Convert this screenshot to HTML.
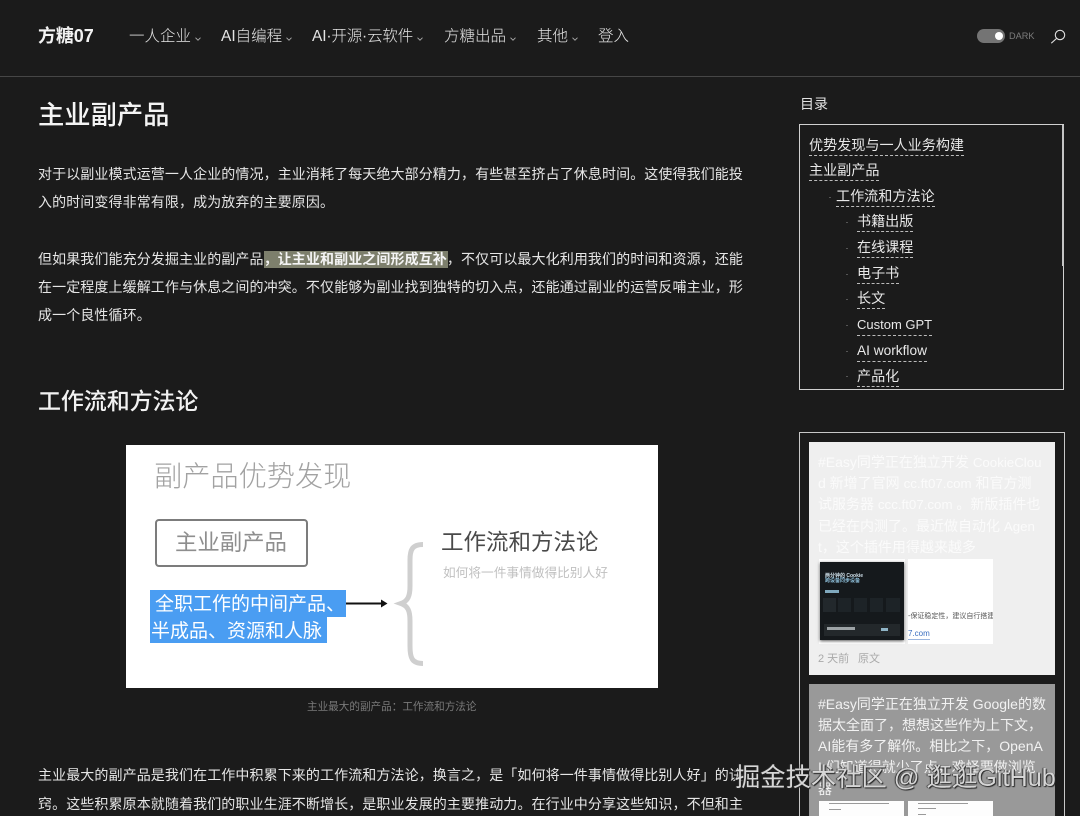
<!DOCTYPE html>
<html lang="zh"><head><meta charset="utf-8"><style>
html,body{margin:0;padding:0;background:#1b1b1b}
#p{position:relative;width:1080px;height:816px;overflow:hidden;background:#1b1b1b;color:#e8e8e8;font-family:"Liberation Sans","Noto Sans CJK SC",sans-serif}
#p div{position:absolute;white-space:nowrap}
.n{font-size:15.5px;top:26px;line-height:22px;color:#e4e4e4;font-weight:300}
.n svg{margin-left:4px;vertical-align:0}
.l{left:38px;font-size:14px;line-height:20px;letter-spacing:.1px;color:#e6e6e6}
.t{font-size:14.1px;line-height:18px;color:#e8e8e8;border-bottom:1px dashed #bbb;padding-bottom:1px}
.d{width:2px;height:1px;background:#555}
.c1{font-size:14px;line-height:20px;color:#fbfbfb;left:818px}
.c1 span{font-size:13.300px}
.c2{font-size:14px;line-height:20px;color:#f2f2f2;left:818px}
.g{background:#9a9a9a;height:1px}
</style></head><body><div id="p">

<div style="left:38px;top:25px;font-size:18px;line-height:23px;font-weight:700;color:#f2f2f2;letter-spacing:-.1px">方糖07</div>
<div class="n" style="left:129px">一人企业<svg width="6" height="4" viewBox="0 0 6 4"><path d="M.5 .7 3 3.200 5.500 .7" fill="none" stroke="#aaa" stroke-width=".9"/></svg></div>
<div class="n" style="left:221px">AI自编程<svg width="6" height="4" viewBox="0 0 6 4"><path d="M.5 .7 3 3.200 5.500 .7" fill="none" stroke="#aaa" stroke-width=".9"/></svg></div>
<div class="n" style="left:312px;letter-spacing:-.15px">AI·开源·云软件<svg width="6" height="4" viewBox="0 0 6 4"><path d="M.5 .7 3 3.200 5.500 .7" fill="none" stroke="#aaa" stroke-width=".9"/></svg></div>
<div class="n" style="left:444px">方糖出品<svg width="6" height="4" viewBox="0 0 6 4"><path d="M.5 .7 3 3.200 5.500 .7" fill="none" stroke="#aaa" stroke-width=".9"/></svg></div>
<div class="n" style="left:537px">其他<svg width="6" height="4" viewBox="0 0 6 4"><path d="M.5 .7 3 3.200 5.500 .7" fill="none" stroke="#aaa" stroke-width=".9"/></svg></div>
<div class="n" style="left:598px">登入</div>

<div style="left:977px;top:29px;width:28px;height:14px;border-radius:7px;background:#747474"></div>
<div style="left:995px;top:32px;width:8px;height:8px;border-radius:50%;background:#fff"></div>
<div style="left:1009px;top:30px;font-size:9.200px;line-height:13px;color:#7c7c7c">DARK</div>
<svg style="position:absolute;left:1050px;top:28px" width="16" height="16" viewBox="0 0 16 16"><circle cx="10" cy="7" r="4.700" fill="none" stroke="#ddd" stroke-width="1.100"/><path d="M6.600 10.400 1.300 15.200" stroke="#ddd" stroke-width="1.100" fill="none"/></svg>
<div style="left:0;top:76px;width:1080px;height:1px;background:#464646"></div>

<div style="left:38px;top:99px;font-size:26.300px;line-height:33px;font-weight:500;color:#f4f4f4">主业副产品</div>
<div class="l" style="top:164px">对于以副业模式运营一人企业的情况，主业消耗了每天绝大部分精力，有些甚至挤占了休息时间。这使得我们能投</div>
<div class="l" style="top:192px">入的时间变得非常有限，成为放弃的主要原因。</div>
<div style="left:264px;top:251px;width:184px;height:17px;background:#7d7f6c"></div>
<div class="l" style="top:249px">但如果我们能充分发掘主业的副产品<b style="font-weight:700;color:#f4f4f4">，让主业和副业之间形成互补</b>，不仅可以最大化利用我们的时间和资源，还能</div>
<div class="l" style="top:277px">在一定程度上缓解工作与休息之间的冲突。不仅能够为副业找到独特的切入点，还能通过副业的运营反哺主业，形</div>
<div class="l" style="top:305px">成一个良性循环。</div>
<div style="left:38px;top:386px;font-size:23px;line-height:30px;font-weight:500;color:#f2f2f2;letter-spacing:-.1px">工作流和方法论</div>

<div style="left:126px;top:445px;width:532px;height:243px;background:#fff"></div>
<div style="left:154px;top:458px;font-size:28.200px;line-height:36px;color:#a2a2a2;font-weight:300">副产品优势发现</div>
<div style="left:155px;top:519px;width:149px;height:44px;border:2px solid #7c7c7c;border-radius:4px"></div>
<div style="left:175px;top:529px;font-size:22.400px;line-height:28px;color:#8e8e8e">主业副产品</div>
<div style="left:150px;top:590px;width:196px;height:27px;background:#4a9df2"></div>
<div style="left:150px;top:617px;width:177px;height:26px;background:#4a9df2"></div>
<div style="left:155px;top:593px;font-size:19px;line-height:24px;color:#fff">全职工作的中间产品、</div>
<div style="left:151px;top:620px;font-size:19px;line-height:24px;color:#fff">半成品、资源和人脉</div>
<svg style="position:absolute;left:346px;top:596px" width="42" height="14"><path d="M0 7.500H36" stroke="#111" stroke-width="2"/><path d="M35 3.500 41.500 7.500 35 11.500Z" fill="#111"/></svg>
<svg style="position:absolute;left:392px;top:538px" width="36" height="132"><path d="M31 6.500C20 6.500 18 12 18 22V48C18 58 16 63 9 65.500 16 68 18 73 18 83V108C18 120 20 125.500 31 125.500" fill="none" stroke="#cfcfcf" stroke-width="5"/></svg>
<div style="left:441px;top:529px;font-size:22.500px;line-height:28px;color:#4a4a4a">工作流和方法论</div>
<div style="left:443px;top:565px;font-size:12.700px;line-height:16px;color:#c0c0c0">如何将一件事情做得比别人好</div>
<div style="left:307px;top:700px;font-size:10.600px;line-height:14px;color:#7a7a7a">主业最大的副产品：工作流和方法论</div>

<div class="l" style="top:765px">主业最大的副产品是我们在工作中积累下来的工作流和方法论，换言之，是「如何将一件事情做得比别人好」的诀</div>
<div class="l" style="top:794px">窍。这些积累原本就随着我们的职业生涯不断增长，是职业发展的主要推动力。在行业中分享这些知识，不但和主</div>

<div style="left:800px;top:95px;font-size:14px;line-height:18px;color:#e2e2e2">目录</div>
<div style="left:799px;top:124px;width:263px;height:264px;border:1px solid #d0d0d0"></div>
<div style="left:1062px;top:125px;width:2px;height:141px;background:#c4c4c4"></div>
<div class="t" style="left:809px;top:136px">优势发现与一人业务构建</div>
<div class="t" style="left:809px;top:161px">主业副产品</div>
<div class="d" style="left:829px;top:197px"></div>
<div class="t" style="left:836px;top:187px">工作流和方法论</div>
<div class="d" style="left:846px;top:222px"></div>
<div class="t" style="left:857px;top:212px">书籍出版</div>
<div class="d" style="left:846px;top:248px"></div>
<div class="t" style="left:857px;top:238px">在线课程</div>
<div class="d" style="left:846px;top:274px"></div>
<div class="t" style="left:857px;top:264px">电子书</div>
<div class="d" style="left:846px;top:299px"></div>
<div class="t" style="left:857px;top:289px">长文</div>
<div class="d" style="left:846px;top:325px"></div>
<div class="t" style="left:857px;top:316px;font-size:13px">Custom GPT</div>
<div class="d" style="left:846px;top:351px"></div>
<div class="t" style="left:857px;top:342px;font-size:13.700px">AI workflow</div>
<div class="d" style="left:846px;top:376px"></div>
<div class="t" style="left:857px;top:367px">产品化</div>

<div style="left:799px;top:432px;width:264px;height:400px;border:1px solid #c8c8c8"></div>
<div style="left:809px;top:442px;width:246px;height:233px;background:#efefef"></div>
<div class="c1" style="top:452px">#Easy同学正在独立开发 <span>CookieClou</span></div>
<div class="c1" style="top:473px">d 新增了官网 <span>cc.ft07.com</span> 和官方测</div>
<div class="c1" style="top:494px">试服务器 <span>ccc.ft07.com</span> 。新版插件也</div>
<div class="c1" style="top:516px">已经在内测了。最近做自动化 <span>Agen</span></div>
<div class="c1" style="top:537px">t，这个插件用得越来越多</div>

<div style="left:819px;top:559px;width:86px;height:85px;background:#fff"></div>
<div style="left:820px;top:562px;width:84px;height:78px;background:#15191c;box-shadow:0 1px 3px #555"></div>
<div style="left:825px;top:574px;font-size:5px;line-height:5px;color:#cfe0ea;font-weight:700">两分钟的 Cookie</div>
<div style="left:825px;top:579px;font-size:5px;line-height:5px;color:#8fc1dc;font-weight:700">跨设备同步设备</div>
<div style="left:825px;top:590px;width:14px;height:3px;background:#7fa8bd"></div>
<div style="left:823px;top:598px;width:13px;height:14px;background:#22282c"></div>
<div style="left:838px;top:598px;width:13px;height:14px;background:#1d2327"></div>
<div style="left:854px;top:598px;width:13px;height:14px;background:#1d2327"></div>
<div style="left:870px;top:598px;width:13px;height:14px;background:#1d2327"></div>
<div style="left:886px;top:598px;width:14px;height:14px;background:#1d2327"></div>
<div style="left:824px;top:624px;width:76px;height:12px;background:#23282b"></div>
<div style="left:827px;top:627px;width:28px;height:3px;background:#9da3a6"></div>
<div style="left:881px;top:628px;width:7px;height:3px;background:#8fb4c6"></div>

<div style="left:908px;top:559px;width:85px;height:85px;background:#fff"></div>
<div style="left:908px;top:612px;width:85px;overflow:hidden;font-size:7px;line-height:9px;color:#555">-保证稳定性，建议自行搭建以</div>
<div style="left:908px;top:628px;font-size:8px;line-height:11px;color:#3b6fc0;border-bottom:1px solid #9ab5de">7.com</div>

<div style="left:818px;top:651px;font-size:11px;line-height:16px;color:#a9a9a9">2 天前</div>
<div style="left:858px;top:651px;font-size:11px;line-height:16px;color:#a9a9a9">原文</div>

<div style="left:809px;top:684px;width:246px;height:140px;background:#999"></div>
<div class="c2" style="top:694px">#Easy同学正在独立开发 Google的数</div>
<div class="c2" style="top:715px">据太全面了，想想这些作为上下文，</div>
<div class="c2" style="top:736px">AI能有多了解你。相比之下，OpenA</div>
<div class="c2" style="top:757px">I 们知道得就少了点，难怪要做浏览</div>
<div class="c2" style="top:779px">器</div>
<div style="left:819px;top:801px;width:85px;height:20px;background:#fdfdfd"></div>
<div style="left:908px;top:801px;width:85px;height:20px;background:#fdfdfd"></div>
<div class="g" style="left:829px;top:803px;width:60px"></div>
<div class="g" style="left:829px;top:809px;width:12px"></div>
<div class="g" style="left:918px;top:803px;width:50px"></div>
<div class="g" style="left:918px;top:808px;width:18px"></div>
<div class="g" style="left:918px;top:814px;width:8px"></div>

<div style="left:735px;top:763px;font-size:25.300px;line-height:31px;color:#d6d6d6;text-shadow:1px 1px 1px #222,-1px 0 1px #333">掘金技术社区 @ 逛逛GitHub</div>
</div></body></html>
